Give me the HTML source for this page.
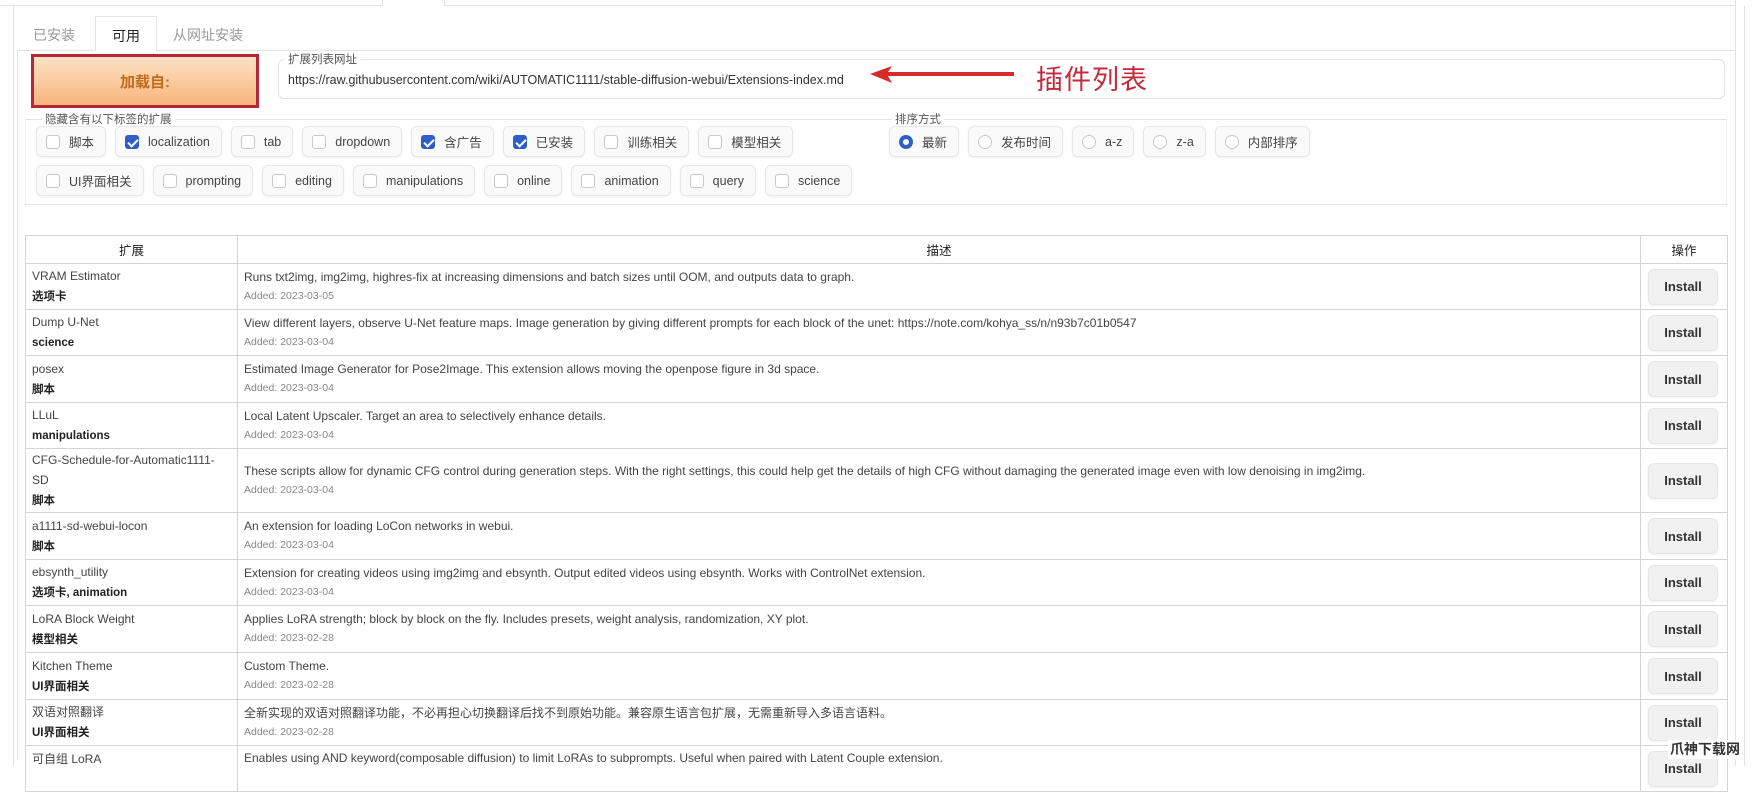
<!DOCTYPE html>
<html><head><meta charset="utf-8"><style>
*{box-sizing:border-box;margin:0;padding:0}
body{width:1753px;height:759px;overflow:hidden;background:#fff;font-family:"Liberation Sans","Noto Sans CJK SC",sans-serif;color:#333;position:relative}
.abs{position:absolute}
.chip{display:flex;align-items:center;height:31px;border:1px solid #e5e7eb;border-radius:6px;background:#fafafa;padding:0 11px 0 9px;font-size:12.5px;color:#444;box-shadow:0 1px 2px rgba(0,0,0,.06);white-space:nowrap}
.cb{width:14px;height:14px;border:1px solid #c8c8c8;border-radius:3px;background:#fff;margin-right:9px;display:inline-block;position:relative}
.cb.on{background:#2f5fc4;border-color:#2f5fc4}
.cb.on:after{content:"";position:absolute;left:4px;top:1px;width:4px;height:8px;border:solid #fff;border-width:0 2px 2px 0;transform:rotate(45deg)}
.rd{width:14px;height:14px;border:1px solid #c8c8c8;border-radius:50%;background:#fff;margin-right:9px;display:inline-block}
.rd.on{border:4px solid #2f5fc4}
.row{display:flex;gap:9px}
table{border-collapse:collapse;table-layout:fixed;font-size:12px}
td,th{border:1px solid #d4d4d4;vertical-align:middle}
th{height:28px;font-weight:normal;font-size:12.5px;color:#222}
td.n{padding:0 6px;color:#444;line-height:20px}
td.n b{font-weight:bold;color:#222;font-size:11.5px}
td.d{padding:0 6px;color:#444;line-height:19px}
td.d small{font-size:10.5px;color:#888;display:block}
td.a{padding:0 0 0 7px}
.btn{width:70px;height:36px;border-radius:6px;background:#f1f1f1;border:1px solid #e6e6e6;font-weight:bold;font-size:13px;color:#333;display:flex;align-items:center;justify-content:center;box-shadow:0 1px 2px rgba(0,0,0,.06)}
</style></head><body>
<div class="abs" style="left:0;top:0;width:383px;height:6px;border-bottom:1px solid #e3e3e3;border-right:1px solid #e3e3e3"></div>
<div class="abs" style="left:444px;top:0;width:1292px;height:6px;border-bottom:1px solid #e3e3e3;border-left:1px solid #e3e3e3;border-right:1px solid #e3e3e3"></div>
<div class="abs" style="left:13px;top:6px;width:1723px;height:760px;border-left:1px solid #e3e3e3;border-right:1px solid #e3e3e3"></div>
<div class="abs" style="left:1744px;top:6px;width:1px;height:760px;background:#e3e3e3"></div>
<div class="abs" style="left:33px;top:25px;font-size:14px;color:#999">已安装</div>
<div class="abs" style="left:95px;top:16px;width:62px;height:35px;border:1px solid #e3e3e3;border-bottom:none;background:#fff;z-index:2;font-size:14px;color:#222;text-align:center;padding-top:9px">可用</div>
<div class="abs" style="left:173px;top:25px;font-size:14px;color:#999">从网址安装</div>
<div class="abs" style="left:17px;top:50px;width:1719px;height:710px;border-top:1px solid #e3e3e3;border-left:1px solid #e3e3e3"></div>
<div class="abs" style="left:31px;top:54px;width:228px;height:54px;border:3px solid #b3283a;background:linear-gradient(#fde2c6,#f8b57a);display:flex;align-items:center;justify-content:center;font-size:15px;color:#c26a1c;font-weight:bold">加载自:</div>
<div class="abs" style="left:278px;top:59px;width:1447px;height:40px;border:1px solid #e3e3e3;border-radius:6px;background:#fff;font-size:12.5px;color:#333;padding:13px 0 0 9px">https://raw.githubusercontent.com/wiki/AUTOMATIC1111/stable-diffusion-webui/Extensions-index.md</div>
<div class="abs" style="left:284px;top:51px;background:#fff;padding:0 4px;font-size:11.5px;color:#555">扩展列表网址</div>
<svg class="abs" style="left:868px;top:64px" width="150" height="22"><polygon points="2,10 24,2 20,8 146,8 146,12 20,12 24,19" fill="#d72a2a"/></svg>
<div class="abs" style="left:1036px;top:58px;font-size:27px;color:#c42a3c;letter-spacing:1px">插件列表</div>
<div class="abs" style="left:25px;top:119px;width:862px;height:85px;border-top:1px solid #e3e3e3;border-left:1px solid #eee"></div>
<div class="abs" style="left:42px;top:111px;background:#fff;padding:0 3px;font-size:11.5px;color:#555">隐藏含有以下标签的扩展</div>
<div class="abs" style="left:887px;top:119px;width:840px;height:85px;border-top:1px solid #e3e3e3;border-right:1px solid #eee"></div>
<div class="abs" style="left:892px;top:111px;background:#fff;padding:0 3px;font-size:11.5px;color:#555">排序方式</div>
<div class="abs" style="left:25px;top:204px;width:1702px;height:1px;background:#e3e3e3"></div>
<div class="abs row" style="left:36px;top:126px">
<div class="chip"><i class="cb"></i>脚本</div><div class="chip"><i class="cb on"></i>localization</div><div class="chip"><i class="cb"></i>tab</div><div class="chip"><i class="cb"></i>dropdown</div><div class="chip"><i class="cb on"></i>含广告</div><div class="chip"><i class="cb on"></i>已安装</div><div class="chip"><i class="cb"></i>训练相关</div><div class="chip"><i class="cb"></i>模型相关</div></div>
<div class="abs row" style="left:36px;top:165px">
<div class="chip"><i class="cb"></i>UI界面相关</div><div class="chip"><i class="cb"></i>prompting</div><div class="chip"><i class="cb"></i>editing</div><div class="chip"><i class="cb"></i>manipulations</div><div class="chip"><i class="cb"></i>online</div><div class="chip"><i class="cb"></i>animation</div><div class="chip"><i class="cb"></i>query</div><div class="chip"><i class="cb"></i>science</div></div>
<div class="abs row" style="left:889px;top:126px">
<div class="chip"><i class="rd on"></i>最新</div><div class="chip"><i class="rd"></i>发布时间</div><div class="chip"><i class="rd"></i>a-z</div><div class="chip"><i class="rd"></i>z-a</div><div class="chip"><i class="rd"></i>内部排序</div></div>
<table class="abs" style="left:25px;top:235px;width:1702px">
<colgroup><col style="width:212px"><col style="width:1403px"><col style="width:87px"></colgroup>
<tr><th>扩展</th><th>描述</th><th>操作</th></tr>
<tr style="height:46px"><td class="n">VRAM Estimator<br><b>选项卡</b></td><td class="d">Runs txt2img, img2img, highres-fix at increasing dimensions and batch sizes until OOM, and outputs data to graph.<small>Added: 2023-03-05</small></td><td class="a"><div class="btn">Install</div></td></tr>
<tr style="height:46px"><td class="n">Dump U-Net<br><b>science</b></td><td class="d">View different layers, observe U-Net feature maps. Image generation by giving different prompts for each block of the unet: https://note.com/kohya_ss/n/n93b7c01b0547<small>Added: 2023-03-04</small></td><td class="a"><div class="btn">Install</div></td></tr>
<tr style="height:47px"><td class="n">posex<br><b>脚本</b></td><td class="d">Estimated Image Generator for Pose2Image. This extension allows moving the openpose figure in 3d space.<small>Added: 2023-03-04</small></td><td class="a"><div class="btn">Install</div></td></tr>
<tr style="height:46px"><td class="n">LLuL<br><b>manipulations</b></td><td class="d">Local Latent Upscaler. Target an area to selectively enhance details.<small>Added: 2023-03-04</small></td><td class="a"><div class="btn">Install</div></td></tr>
<tr style="height:64px"><td class="n">CFG-Schedule-for-Automatic1111-SD<br><b>脚本</b></td><td class="d">These scripts allow for dynamic CFG control during generation steps. With the right settings, this could help get the details of high CFG without damaging the generated image even with low denoising in img2img.<small>Added: 2023-03-04</small></td><td class="a"><div class="btn">Install</div></td></tr>
<tr style="height:47px"><td class="n">a1111-sd-webui-locon<br><b>脚本</b></td><td class="d">An extension for loading LoCon networks in webui.<small>Added: 2023-03-04</small></td><td class="a"><div class="btn">Install</div></td></tr>
<tr style="height:46px"><td class="n">ebsynth_utility<br><b>选项卡, animation</b></td><td class="d">Extension for creating videos using img2img and ebsynth. Output edited videos using ebsynth. Works with ControlNet extension.<small>Added: 2023-03-04</small></td><td class="a"><div class="btn">Install</div></td></tr>
<tr style="height:47px"><td class="n">LoRA Block Weight<br><b>模型相关</b></td><td class="d">Applies LoRA strength; block by block on the fly. Includes presets, weight analysis, randomization, XY plot.<small>Added: 2023-02-28</small></td><td class="a"><div class="btn">Install</div></td></tr>
<tr style="height:47px"><td class="n">Kitchen Theme<br><b>UI界面相关</b></td><td class="d">Custom Theme.<small>Added: 2023-02-28</small></td><td class="a"><div class="btn">Install</div></td></tr>
<tr style="height:46px"><td class="n">双语对照翻译<br><b>UI界面相关</b></td><td class="d">全新实现的双语对照翻译功能，不必再担心切换翻译后找不到原始功能。兼容原生语言包扩展，无需重新导入多语言语料。<small>Added: 2023-02-28</small></td><td class="a"><div class="btn">Install</div></td></tr>
<tr style="height:46px"><td class="n" style="vertical-align:top;padding-top:3px">可自组 LoRA</td><td class="d" style="vertical-align:top;padding-top:3px">Enables using AND keyword(composable diffusion) to limit LoRAs to subprompts. Useful when paired with Latent Couple extension.</td><td class="a"><div class="btn">Install</div></td></tr>
</table>
<div class="abs" style="left:1668px;top:740px;font-size:14px;font-weight:bold;color:#333;background:#fff;padding:0 2px;white-space:nowrap;line-height:19px">爪神下载网</div>
</body></html>
